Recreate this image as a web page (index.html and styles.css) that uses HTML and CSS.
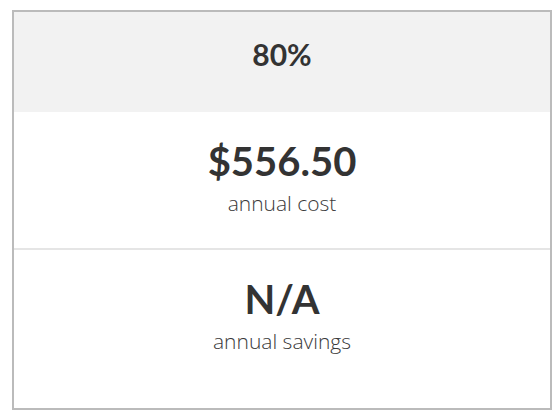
FILE: index.html
```html
<!DOCTYPE html>
<html>
<head>
<meta charset="utf-8">
<link rel="stylesheet" href="styles.css">
</head>
<body>
<div class="card">
  <div class="head"><span class="pct">80%</span></div>
  <div class="stat stat-cost">
    <div class="value">$556.50</div>
    <div class="label">annual cost</div>
  </div>
  <div class="stat stat-savings">
    <div class="value">N/A</div>
    <div class="label">annual savings</div>
  </div>
</div>
</body>
</html>
```
FILE: styles.css
```css
html, body {
  margin: 0;
  padding: 0;
  background: #fff;
}
body {
  padding: 10px 8px 0 12px;
  font-family: Lato, "Open Sans", sans-serif;
  color: #333;
}
.card {
  width: 536px;
  height: 396px;
  border: 2px solid #bbb;
  display: flex;
  flex-direction: column;
}
.head {
  height: 100px;
  box-sizing: border-box;
  padding-top: 27px;
  background: #f2f2f2;
  display: flex;
  justify-content: center;
}
.pct {
  font-weight: 700;
  font-size: 30px;
  line-height: 30px;
  color: #333;
}
.stat {
  display: flex;
  flex-direction: column;
  align-items: center;
  padding-top: 27px;
}
.stat-cost {
  box-sizing: border-box;
  height: 138px;
  border-bottom: 2px solid #e5e5e5;
}
.stat-savings {
  flex: 1;
}
.value {
  font-weight: 700;
  font-size: 40px;
  line-height: 44px;
  color: #333;
}
.label {
  font-family: "Open Sans", Lato, sans-serif;
  font-weight: 300;
  font-size: 21px;
  line-height: 28px;
  margin-top: 6px;
  color: #3a3a3a;
}
```
